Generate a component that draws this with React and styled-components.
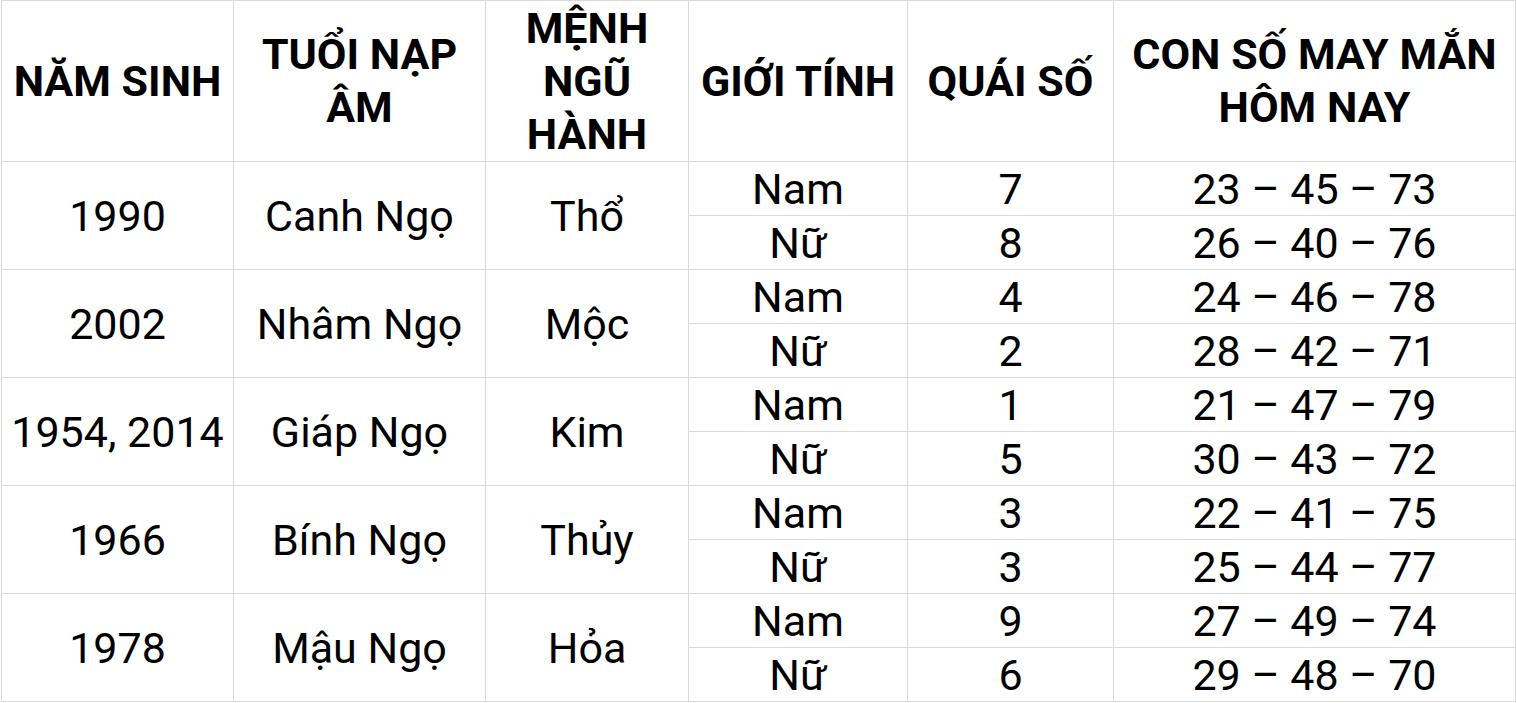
import React from "react";
import styled, { createGlobalStyle } from "styled-components";

const GlobalStyle = createGlobalStyle`
  html, body {
    margin: 0;
    padding: 0;
    background: #ffffff;
  }
  body {
    font-family: Roboto, "Noto Sans", "Liberation Sans", sans-serif;
    color: #000;
  }
`;

const Wrap = styled.div`
  padding-left: 1px;
  width: 1515px;
`;

const Table = styled.table`
  border-collapse: collapse;
  table-layout: fixed;
  width: 1514px;
  border-left: 1px solid #a3a3a3;
`;

const Col = styled.col`
  width: ${(p) => p.$w}px;
`;

const HeadCell = styled.th`
  height: 160px;
  padding: 0 4px;
  border: 1px solid #dadada;
  font-size: 43px;
  font-weight: 700;
  line-height: 53px;
  text-align: center;
  vertical-align: middle;
`;

const Row = styled.tr`
  height: 54px;
`;

const Cell = styled.td`
  border: 1px solid #dadada;
  padding: 0;
  font-size: 43px;
  font-weight: 400;
  line-height: 52px;
  text-align: center;
  vertical-align: middle;
  white-space: nowrap;
`;

const columns = [232, 252, 203, 219, 206, 402];

const headers = [
  "NĂM SINH",
  "TUỔI NẠP ÂM",
  "MỆNH NGŨ HÀNH",
  "GIỚI TÍNH",
  "QUÁI SỐ",
  "CON SỐ MAY MẮN HÔM NAY",
];

const data = [
  {
    year: "1990",
    napAm: "Canh Ngọ",
    menh: "Thổ",
    rows: [
      ["Nam", "7", "23 – 45 – 73"],
      ["Nữ", "8", "26 – 40 – 76"],
    ],
  },
  {
    year: "2002",
    napAm: "Nhâm Ngọ",
    menh: "Mộc",
    rows: [
      ["Nam", "4", "24 – 46 – 78"],
      ["Nữ", "2", "28 – 42 – 71"],
    ],
  },
  {
    year: "1954, 2014",
    napAm: "Giáp Ngọ",
    menh: "Kim",
    rows: [
      ["Nam", "1", "21 – 47 – 79"],
      ["Nữ", "5", "30 – 43 – 72"],
    ],
  },
  {
    year: "1966",
    napAm: "Bính Ngọ",
    menh: "Thủy",
    rows: [
      ["Nam", "3", "22 – 41 – 75"],
      ["Nữ", "3", "25 – 44 – 77"],
    ],
  },
  {
    year: "1978",
    napAm: "Mậu Ngọ",
    menh: "Hỏa",
    rows: [
      ["Nam", "9", "27 – 49 – 74"],
      ["Nữ", "6", "29 – 48 – 70"],
    ],
  },
];

export default function App() {
  return (
    <>
      <GlobalStyle />
      <Wrap>
        <Table>
          <colgroup>
            {columns.map((w, i) => (
              <Col key={i} $w={w} />
            ))}
          </colgroup>
          <thead>
            <tr>
              {headers.map((h) => (
                <HeadCell key={h}>{h}</HeadCell>
              ))}
            </tr>
          </thead>
          <tbody>
            {data.map((group) =>
              group.rows.map((r, i) => (
                <Row key={group.year + r[0]}>
                  {i === 0 && (
                    <>
                      <Cell rowSpan={2}>{group.year}</Cell>
                      <Cell rowSpan={2}>{group.napAm}</Cell>
                      <Cell rowSpan={2}>{group.menh}</Cell>
                    </>
                  )}
                  <Cell>{r[0]}</Cell>
                  <Cell>{r[1]}</Cell>
                  <Cell>{r[2]}</Cell>
                </Row>
              ))
            )}
          </tbody>
        </Table>
      </Wrap>
    </>
  );
}
